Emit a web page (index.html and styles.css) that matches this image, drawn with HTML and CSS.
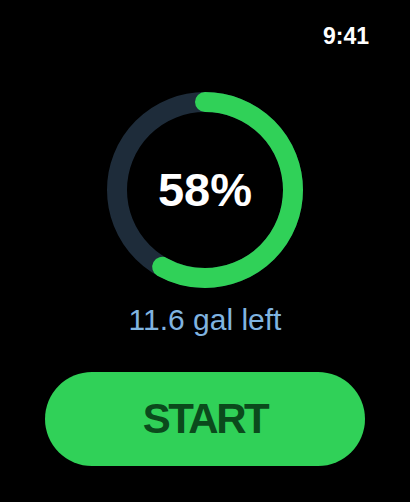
FILE: index.html
```html
<!DOCTYPE html>
<html lang="en">
<head>
  <meta charset="UTF-8" />
  <meta name="viewport" content="width=device-width, initial-scale=1.0" />
  <title>Fuel</title>
  <link rel="stylesheet" href="styles.css">
</head>
<body class="watch">
  <div class="status-bar">
    <span class="clock">9:41</span>
  </div>

  <main class="fuel">
    <div class="gauge">
      <svg class="gauge-ring" width="196" height="196" viewBox="0 0 196 196">
        <circle class="gauge-track" cx="98" cy="98" r="88" />
        <!-- 58% of 2*pi*88 = 320.7 -->
        <circle class="gauge-fill" cx="98" cy="98" r="88" stroke-dasharray="320.7 552.92" />
      </svg>
      <div class="gauge-value">58%</div>
    </div>

    <p class="remaining">11.6 gal left</p>

    <button class="start-btn">START</button>
  </main>
</body>
</html>
```

FILE: styles.css
```css
html, body {
  margin: 0;
  padding: 0;
  background: #000;
}
.watch {
  width: 410px;
  height: 502px;
  overflow: hidden;
  font-family: "Liberation Sans", Arial, Helvetica, sans-serif;
  color: #fff;
}

.status-bar {
  display: flex;
  justify-content: flex-end;
  padding: 23px 41px 0;
}
.clock {
  font-size: 23px;
  font-weight: bold;
  line-height: 27px;
}

.fuel {
  display: flex;
  flex-direction: column;
  align-items: center;
}

.gauge {
  margin-top: 42px;
  display: grid;
  place-items: center;
  width: 196px;
  height: 196px;
}
.gauge > * { grid-area: 1 / 1; }
.gauge-ring {
  display: block;
  transform: rotate(-90deg);
}
.gauge-track {
  fill: none;
  stroke: #1e2c3a;
  stroke-width: 20;
}
.gauge-fill {
  fill: none;
  stroke: #30d158;
  stroke-width: 20;
  stroke-linecap: round;
}
.gauge-value {
  font-size: 47px;
  font-weight: bold;
  line-height: 1.15;
}

.remaining {
  margin: 15px 0 0;
  font-size: 30px;
  color: #80b4e0;
}

.start-btn {
  margin-top: 35px;
  width: 320px;
  height: 94px;
  border: none;
  border-radius: 47px;
  background: #30d158;
  color: #0b4a1c;
  font-family: inherit;
  font-size: 42px;
  font-weight: bold;
  letter-spacing: -2.5px;
  padding: 0;
  display: flex;
  align-items: center;
  justify-content: center;
}
```
